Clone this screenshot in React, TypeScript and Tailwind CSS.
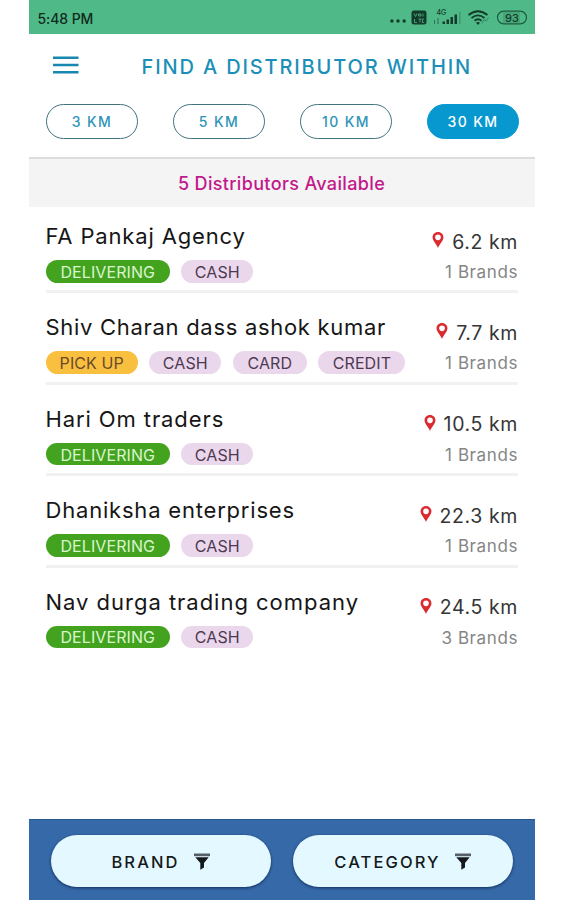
type Tag = "DELIVERING" | "PICK UP" | "CASH" | "CARD" | "CREDIT";

interface Distributor {
  name: string;
  nameClass: string;
  tags: Tag[];
  distance: string;
  brands: number;
}

const distributors: Distributor[] = [
  { name: "FA Pankaj Agency", nameClass: "tracking-[0.85px]", tags: ["DELIVERING", "CASH"], distance: "6.2 km", brands: 1 },
  { name: "Shiv Charan dass ashok kumar", nameClass: "tracking-[0.7px]", tags: ["PICK UP", "CASH", "CARD", "CREDIT"], distance: "7.7 km", brands: 1 },
  { name: "Hari Om traders", nameClass: "tracking-[0.9px]", tags: ["DELIVERING", "CASH"], distance: "10.5 km", brands: 1 },
  { name: "Dhaniksha enterprises", nameClass: "tracking-[0.8px]", tags: ["DELIVERING", "CASH"], distance: "22.3 km", brands: 1 },
  { name: "Nav durga trading company", nameClass: "tracking-[0.98px]", tags: ["DELIVERING", "CASH"], distance: "24.5 km", brands: 3 },
];

const tagStyles: Record<Tag, string> = {
  DELIVERING: "w-[124.5px] bg-[#43a31f] text-[#d9f5cd]",
  "PICK UP": "w-[92.5px] bg-[#f9c040] text-[#6b4a2a]",
  CASH: "w-[72px] bg-[#ebd7ec] text-[#4d3a52]",
  CARD: "w-[74.5px] bg-[#ebd7ec] text-[#4d3a52]",
  CREDIT: "w-[87px] bg-[#ebd7ec] text-[#4d3a52]",
};

const ranges = ["3 KM", "5 KM", "10 KM", "30 KM"];

const PinIcon = () => (
  <svg width="12" height="16" viewBox="0 0 12 17" className="mb-[3px]">
    <path
      fillRule="evenodd"
      fill="#d92b30"
      d="M6 0C2.6 0 .2 2.5.2 5.7.2 9.5 4 12.5 6 17c2-4.5 5.8-7.5 5.8-11.3C11.8 2.5 9.4 0 6 0Zm0 2.7a3 3 0 1 1 0 6 3 3 0 0 1 0-6Z"
    />
  </svg>
);

const FilterIcon = () => (
  <svg width="16" height="17" viewBox="0 0 16 17">
    <path d="M0 .5h16v2.7H0z" fill="#555f66" />
    <path d="M1.3 4.3h13.4L10 10v4.5l-3.7 2.3V10z" fill="#15191c" />
  </svg>
);

const StatusIcons = () => (
  <svg width="140" height="18" viewBox="0 0 140 18" fill="#123b29">
    {/* more */}
    <circle cx="1.9" cy="13" r="1.7" />
    <circle cx="8" cy="13" r="1.7" />
    <circle cx="14.2" cy="13" r="1.7" />
    {/* VoLTE */}
    <rect x="21.5" y="2.5" width="15" height="14" rx="2.5" />
    <path
      d="M24 5.5l1.5 3 1.500-3M28.500 6h2.500v2h-2.500zM33 5.500v3M24.500 11v3.500h2.500M28.500 11h3M30 11v3.500M34 11h-1.500v3.500h1.800"
      fill="none"
      stroke="#50b988"
      strokeWidth=".8"
    />
    {/* mobile signal */}
    <text x="46.500" y="6.500" fontSize="7" fontWeight="500" fontFamily="Inter, sans-serif">4G</text>
    <path d="M44 12h1v4h-1zM47.500 10h1v6h-1z" opacity=".6" />
    <path d="M52.500 13.500H55V16h-2.500zM56.500 11.500H59V16h-2.500zM60.500 9H63v7h-2.500zM64.500 6.500H67V16h-2.500z" />
    <path d="M69 4h1.500v12H69z" opacity=".25" />
    {/* wifi */}
    <g fill="none" stroke="#123b29" strokeWidth="1.8">
      <path d="M78.500 7q9.500-7.500 19 0" />
      <path d="M81.500 10q6.500-5.200 13 0" />
      <path d="M84.500 12.700q3.500-2.800 7 0" />
    </g>
    <path d="M88 17l-2-2.300q2-1.500 4 0z" />
    <path d="M92 15.500l2.200-4 2.200 1.500 2-3.500" fill="none" stroke="#123b29" opacity=".4" />
    {/* battery */}
    <rect x="107.500" y="3.200" width="29" height="12.600" rx="6.300" fill="none" stroke="#1d5a3f" strokeWidth="1.2" />
    <rect x="113" y="4" width="17" height="11" fill="#123b29" opacity=".15" />
    <text x="122" y="13.500" fontSize="11" fontWeight="500" textAnchor="middle" fontFamily="Inter, sans-serif">93</text>
  </svg>
);

const DistributorRow = ({ item, last }: { item: Distributor; last: boolean }) => (
  <div className={`flex h-[86.4px] justify-between border-b-[3px] ${last ? "border-transparent" : "border-[#f0f1f1]"}`}>
    <div className="flex flex-col pt-[14px]">
      <h2 className={`h-[39px] whitespace-nowrap text-[22px] leading-[30px] text-[#161616] ${item.nameClass}`}>{item.name}</h2>
      <div className="flex gap-[11.3px]">
        {item.tags.map((tag) => (
          <span key={tag} className={`flex h-[22.5px] items-center justify-center rounded-full pt-px text-[16px] tracking-[0.1px] ${tagStyles[tag]}`}>
            {tag}
          </span>
        ))}
      </div>
    </div>
    <div className="flex flex-col items-end pt-[19px]">
      <div className="flex h-[31px] items-center gap-[8px]">
        <PinIcon />
        <span className="-mr-[0.5px] whitespace-nowrap text-[19.5px] leading-[28px] tracking-[0.6px] text-[#353535]">{item.distance}</span>
      </div>
      <span className="-mr-[0.5px] whitespace-nowrap text-[17px] leading-[30px] tracking-[0.6px] text-[#858585]">{item.brands} Brands</span>
    </div>
  </div>
);

export default function App() {
  return (
    <div className="h-[900px] w-[563px] overflow-hidden bg-white pl-[28.5px] font-['Inter',sans-serif]">
      <div className="flex h-full w-[506px] flex-col">
        {/* Status bar */}
        <div className="flex h-[34px] shrink-0 items-center justify-between bg-[#50b988] pl-[9px] pr-[5px] text-[14px] font-medium text-[#10291d]">
          <span className="pt-[2px] tracking-[-0.1px]">5:48 PM</span>
          <StatusIcons />
        </div>

        {/* Header */}
        <header className="h-[123px] shrink-0 pl-[17px] pr-[16px]">
          <div className="flex h-[64px] items-center pl-[7px]">
            <svg width="26" height="18" viewBox="0 0 26 18" fill="#1888b0" className="-mt-[2px]">
              <path d="M0 .5h25.500V3H0zM0 7.700h25.500v2.500H0zM0 15h25.500v2.500H0z" />
            </svg>
            <h1 className="ml-[63px] whitespace-nowrap pt-px text-[20px] font-medium tracking-[1.86px] text-[#1b8fb8]">
              FIND A DISTRIBUTOR WITHIN
            </h1>
          </div>
          <div className="flex justify-between pt-[6px]">
            {ranges.map((range) => (
              <button
                key={range}
                className={`h-[35px] w-[92px] rounded-full border pl-px text-[14px] font-medium tracking-[1.4px] ${
                  range === "30 KM" ? "border-[#0798d0] bg-[#0798d0] text-white" : "border-[#41737f] text-[#2f94b8]"
                }`}
              >
                {range}
              </button>
            ))}
          </div>
        </header>

        <div className="flex h-[50px] shrink-0 items-center justify-center border-t-2 border-[#dcdcdc] bg-[#f4f4f4] text-[18px] font-medium tracking-[0.35px] text-[#c2188b]">
          5 Distributors Available
        </div>

        {/* List */}
        <main className="flex flex-1 flex-col gap-[5px] px-[17px]">
          {distributors.map((item, index) => (
            <DistributorRow key={item.name} item={item} last={index === distributors.length - 1} />
          ))}
        </main>

        {/* Filters */}
        <footer className="flex h-[81px] shrink-0 justify-between border-t border-[#22588f] bg-[#3669a8] px-[22px] pt-[15px]">
          {["BRAND", "CATEGORY"].map((label) => (
            <button
              key={label}
              className="flex h-[52px] w-[220px] items-center justify-center gap-[14px] rounded-full bg-[#e4f8ff] text-[16.5px] font-medium tracking-[2.1px] text-[#15191c] shadow-[0_1px_3px_rgba(0,20,60,0.7)]"
            >
              <span className="pt-[3px]">{label}</span>
              <FilterIcon />
            </button>
          ))}
        </footer>
      </div>
    </div>
  );
}
